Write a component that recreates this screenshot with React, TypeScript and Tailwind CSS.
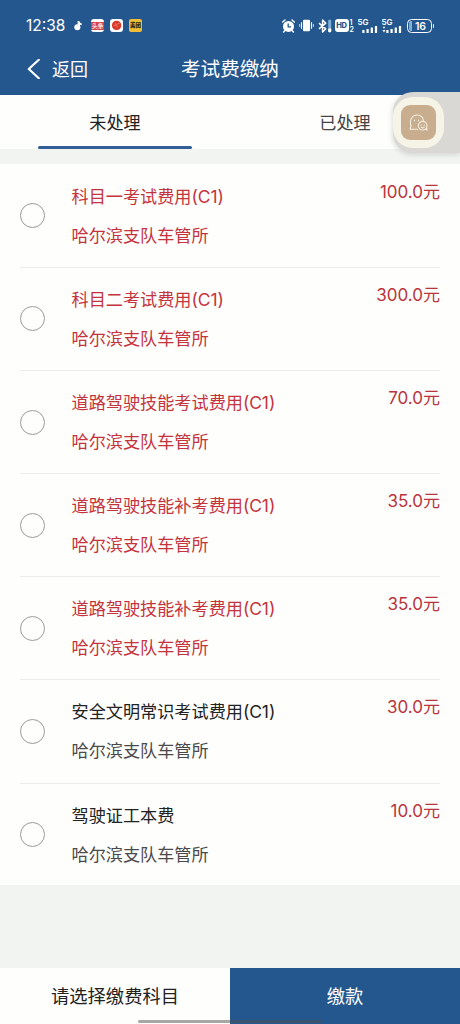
import { useState } from 'react'

type Fee = {
  id: number
  name: string
  code?: string
  office: string
  amount: string
  failed: boolean
}

const OFFICE = '哈尔滨支队车管所'

const FEES: Fee[] = [
  { id: 1, name: '科目一考试费用', code: '(C1)', office: OFFICE, amount: '100.0', failed: true },
  { id: 2, name: '科目二考试费用', code: '(C1)', office: OFFICE, amount: '300.0', failed: true },
  { id: 3, name: '道路驾驶技能考试费用', code: '(C1)', office: OFFICE, amount: '70.0', failed: true },
  { id: 4, name: '道路驾驶技能补考费用', code: '(C1)', office: OFFICE, amount: '35.0', failed: true },
  { id: 5, name: '道路驾驶技能补考费用', code: '(C1)', office: OFFICE, amount: '35.0', failed: true },
  { id: 6, name: '安全文明常识考试费用', code: '(C1)', office: OFFICE, amount: '30.0', failed: false },
  { id: 7, name: '驾驶证工本费', office: OFFICE, amount: '10.0', failed: false },
]

function Signal({ dotted }: { dotted?: boolean }) {
  return (
    <div className="flex h-[14px] w-5 flex-col">
      <span className="text-[8px] leading-[7px] font-semibold">5G</span>
      <svg className="h-[7px] w-5" viewBox="0 0 20 7" fill="currentColor">
        {dotted ? (
          <>
            <circle cx="2" cy="1.4" r="0.9" />
            <path d="M0.5 4L2 6.6 3.5 4z" />
          </>
        ) : null}
        <rect x="4.3" y="4" width="2.2" height="3" />
        <rect x="8.5" y="3" width="2.2" height="4" />
        <rect x="12.7" y="1.5" width="2.2" height="5.5" />
        <rect x="16.9" y="0" width="2.2" height="7" />
      </svg>
    </div>
  )
}

function StatusBar() {
  return (
    <div className="flex h-[50px] items-center px-[26px] pt-px">
      <span className="w-[40px] pt-px text-[15.5px] leading-none whitespace-nowrap">12:38</span>
      <div className="ml-2 flex items-center">
        <svg className="h-[11px] w-2" viewBox="0 0 8 12" fill="currentColor">
          <circle cx="3.3" cy="8" r="3.3" />
          <path d="M3.6 8V1.2h1.9C5.700 2.700 6.300 3.400 8 3.600v2.200c-.9 0-1.400-.2-1.900-.5V8z" />
        </svg>
        <div className="ml-[9px] flex size-[13px] items-center justify-center rounded-[3px] bg-white">
          <span className="flex h-[8px] w-[13px] items-center justify-center bg-[#d8434a] text-[6px] leading-none font-medium tracking-[-0.2px]">
            头条
          </span>
        </div>
        <svg className="ml-[6px] size-[13px]" viewBox="0 0 13 13">
          <rect width="13" height="13" rx="3" fill="#fff" />
          <circle cx="6.6" cy="6.4" r="4.7" fill="#da372b" />
          <path d="M3.6 6.8C5 5.6 6 6.9 7 5.6S8.6 4 9.5 4.5M5 4.4l1.3.8M6.3 8l1.5-.5" stroke="#f3ae91" strokeWidth="0.7" fill="none" />
        </svg>
        <div className="ml-[6px] flex size-[13px] items-center justify-center rounded-[2px] bg-[#efbd36] text-[5.5px] font-black text-[#2e2917]">
          美团
        </div>
      </div>

      <div className="ml-auto flex items-center">
        <svg className="h-[14px] w-[13px]" viewBox="0 0 13 14">
          <circle cx="6.5" cy="7.4" r="5.5" fill="#fff" />
          <path d="M0.7 3L3 1M12.3 3L10 1M2.8 11.7L1.6 13M10.2 11.7l1.2 1.3" stroke="#fff" strokeWidth="1.4" strokeLinecap="round" />
          <path d="M6.2 4.4v3.4h2.9" stroke="#25578f" strokeWidth="1.3" fill="none" />
        </svg>
        <svg className="ml-[4px] h-[13px] w-[15px]" viewBox="0 0 16 13" fill="#fff">
          <rect x="4.2" y="0.3" width="7.6" height="12.4" rx="1.4" />
          <path d="M2.6 3v7M13.4 3v7" stroke="#fff" strokeWidth="1.1" />
          <path d="M0.7 4.8v3.4M15.3 4.8v3.4" stroke="#b3cbe3" strokeWidth="1.1" />
        </svg>
        <svg className="ml-[4px] h-[14px] w-[14px]" viewBox="0 0 14 14" fill="none">
          <path d="M1 4.2l6.8 5.6L4.6 13V1l3.2 3.2L1 9.8" stroke="#fff" strokeWidth="1.5" strokeLinejoin="round" />
          <rect x="10.2" y="0.8" width="3" height="12.4" rx="1" fill="#7eb1d8" />
          <rect x="10.2" y="9.5" width="3" height="3.7" rx="1" fill="#fff" />
        </svg>
        <div className="ml-[3px] flex h-[13px] w-[14px] items-center justify-center rounded-[3px] bg-white pt-px text-[7.5px] leading-none font-extrabold tracking-[-0.2px] text-[#25578f]">
          HD
        </div>
        <div className="ml-[1px] flex w-[5px] flex-col text-[7px] leading-[7px] font-semibold">
          <span>1</span>
          <span>2</span>
        </div>
        <div className="ml-[3px] flex gap-[4px]">
          <Signal />
          <Signal dotted />
        </div>
        <div className="ml-[5px] flex items-center">
          <div className="flex h-[14px] w-[25px] items-center rounded-[4.5px] border-[1.5px] border-white p-px">
            <span className="h-full w-[3px] rounded-l-[2px] bg-[#7eb1d8]" />
            <span className="flex-1 pt-px text-center text-[10.5px] leading-[11px] font-semibold">16</span>
          </div>
          <span className="ml-px h-1 w-[1.5px] rounded-r bg-white" />
        </div>
      </div>
    </div>
  )
}

function NavBar() {
  return (
    <div className="grid h-[45px] grid-cols-3 items-start pt-[5px]">
      <button className="flex h-7 items-center pl-[27px]">
        <svg className="h-5 w-[13px]" viewBox="0 0 13 20" fill="none" stroke="currentColor" strokeWidth="2.2">
          <path d="M11.8 0.8L1.8 10l10 9.2" strokeLinecap="round" strokeLinejoin="round" />
        </svg>
        <span className="ml-3 text-[18px]">返回</span>
      </button>
      <h1 className="text-center text-[19.6px] leading-7 whitespace-nowrap">考试费缴纳</h1>
    </div>
  )
}

function FloatingBubble() {
  return (
    <div className="absolute top-[92px] right-0 flex h-[61px] w-[67px] items-center rounded-l-[20px] bg-[#d9d8d4] shadow-[-1px_2px_5px_rgba(90,100,90,0.2)]">
      <div className="flex size-[51px] items-center justify-center rounded-[20px] bg-[#f6f3e7]">
        <div className="flex size-[35px] items-center justify-center rounded-[9px] bg-[#c8ae8e]">
          <svg className="h-[18px] w-[19px]" viewBox="0 0 19 18" fill="none" stroke="#f5eee2" strokeWidth="1.1" strokeLinecap="round" strokeLinejoin="round">
            <path d="M8.8 15.200H1.200l.8-3.400C.2 7 2.800 1 8 1c3.700 0 6.200 2.500 6.500 6" />
            <path d="M5.500 6v.8M9.500 6v.8" />
            <circle cx="13.700" cy="11.700" r="4.300" />
            <path d="M12.200 10.800v.4M15.200 10.800v.4M12.200 13.200c.8.800 2.200.800 3 0M16.500 15l1.400 1.100-.2-2" />
          </svg>
        </div>
      </div>
    </div>
  )
}

function FeeRow({ fee, checked, last, onToggle }: { fee: Fee; checked: boolean; last: boolean; onToggle: () => void }) {
  return (
    <li className={`flex h-[103.17px] items-start border-b ${last ? 'border-transparent' : 'border-[#ececec]'}`}>
      <button
        onClick={onToggle}
        className={`mt-[38.500px] size-[25px] shrink-0 rounded-full border ${
          checked ? 'border-[#25578f] bg-[#25578f]' : 'border-[#9b9b9b]'
        }`}
      />
      <div className="mt-[20px] ml-[26.500px] flex-1 text-[17.15px] leading-6 whitespace-nowrap">
        <p className={fee.failed ? 'text-[#c5333c]' : 'text-[#222]'}>
          {fee.name}
          {fee.code && <span className="text-[17.500px] tracking-[-0.1px]">{fee.code}</span>}
        </p>
        <p className={`mt-[15px] ${fee.failed ? 'text-[#c5333c]' : 'text-[#4a4a4a]'}`}>{fee.office}</p>
      </div>
      <span className="mt-[15px] text-[17px] leading-6 text-[#b9343b]">{fee.amount}元</span>
    </li>
  )
}

export default function App() {
  const [tab, setTab] = useState<'pending' | 'done'>('pending')
  const [selected, setSelected] = useState<number[]>([])

  function toggle(id: number) {
    setSelected((prev) => (prev.includes(id) ? prev.filter((x) => x !== id) : [...prev, id]))
  }

  return (
    <main className="relative flex h-[1024px] w-[460px] flex-col overflow-hidden bg-[#f2f4f2] font-[Inter,'Noto_Sans_CJK_SC',sans-serif]">
      {/* Header */}
      <header className="h-[95px] shrink-0 bg-[#25578f] text-white">
        <StatusBar />
        <NavBar />
      </header>

      {/* Tabs */}
      <div className="grid h-[54px] shrink-0 grid-cols-2 bg-[#fefefd] text-[17.1px]">
        <button onClick={() => setTab('pending')} className="flex flex-col items-center justify-between text-[#222]">
          <span className="pt-[16px] leading-6">未处理</span>
          {tab === 'pending' && <span className="h-[3.500px] w-[154px] rounded-full bg-[#315f96]" />}
        </button>
        <button onClick={() => setTab('done')} className="flex flex-col items-center justify-between text-[#444]">
          <span className="pt-[16px] leading-6">已处理</span>
          {tab === 'done' && <span className="h-[3.500px] w-[154px] rounded-full bg-[#315f96]" />}
        </button>
      </div>

      {/* Fee list */}
      <ul className="mt-[15px] h-[721px] shrink-0 bg-[#fefefd] px-5 pt-[0.700px]">
        {FEES.map((fee, i) => (
          <FeeRow
            key={fee.id}
            fee={fee}
            checked={selected.includes(fee.id)}
            last={i === FEES.length - 1}
            onToggle={() => toggle(fee.id)}
          />
        ))}
      </ul>

      {/* Footer */}
      <footer className="mt-auto grid h-14 shrink-0 grid-cols-2 pt-0 text-[18.300px]">
        <div className="flex items-center justify-center bg-[#fefefd] pt-px text-[#222]">请选择缴费科目</div>
        <button className="flex items-center justify-center bg-[#25578f] pt-px text-white">缴款</button>
      </footer>

      <FloatingBubble />
      {/* Gesture bar */}
      <div className="absolute bottom-[1px] left-1/2 h-[3px] w-[184px] -translate-x-1/2 rounded-full bg-[#505050]/50" />
    </main>
  )
}
